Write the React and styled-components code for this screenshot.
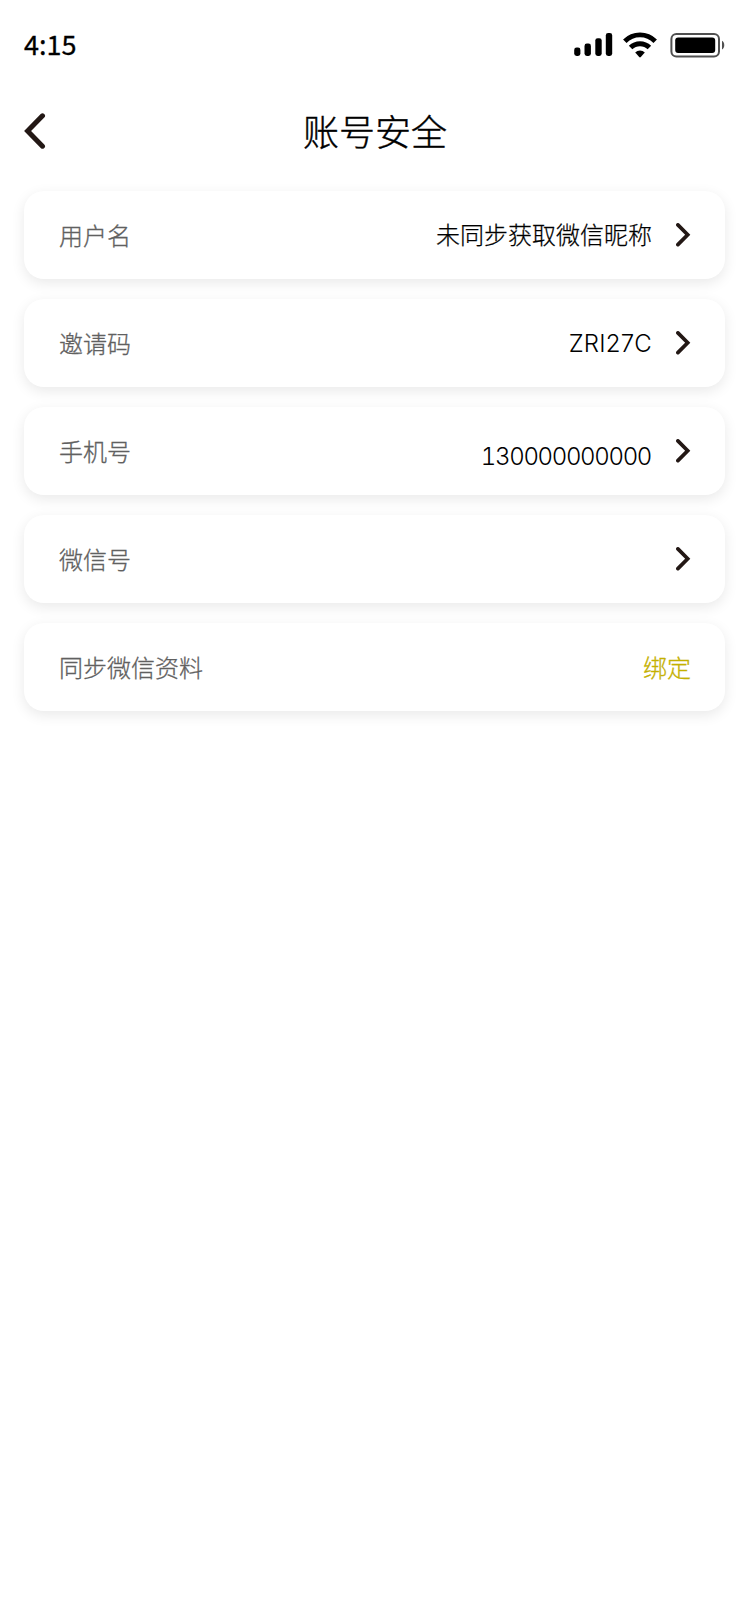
import React from 'react'
import styled, { createGlobalStyle } from 'styled-components'

const GlobalStyle = createGlobalStyle`
body {
    margin: 0;
    background: #FFF;
}

* {
    box-sizing: border-box;
}

svg {
    display: block;
}
`

const Page = styled.div`
min-height: 1624px;
font-family: "Noto Sans CJK SC", sans-serif;
font-weight: 300;
color: #000;
`

const StatusBar = styled.div`
height: 88px;
padding: 0 25px 0 24px;
display: flex;
align-items: center;
justify-content: space-between;
`

const Time = styled.div`
font-size: 27px;
font-weight: 400;
line-height: 40px;
-webkit-text-stroke: 0.3px #000;
`

const StatusIcons = styled.div`
padding-top: 1px;
display: grid;
grid-template-columns: 49px 47px 55px;
align-items: center;
`

const NavBar = styled.div`
height: 88px;
padding: 0 24px 3px;
display: grid;
grid-template-columns: 60px 1fr 60px;
align-items: center;
`

const Title = styled.h1`
margin: 0;
padding-bottom: 2px;
font-size: 36px;
font-weight: 300;
line-height: 52px;
text-align: center;
-webkit-text-stroke: 0.4px #000;
`

const List = styled.div`
padding: 15px 25px 0 24px;
display: grid;
gap: 20px;
`

const Card = styled.div`
height: 88px;
padding: 0 34px 0 35px;
display: flex;
align-items: center;
border-radius: 20px;
background: #FFF;
box-shadow: 0 4px 14px rgba(0, 0, 0, 0.09);
`

const Label = styled.div`
flex: 1;
padding-bottom: 1px;
font-size: 24px;
line-height: 36px;
color: #606060;
-webkit-text-stroke: 0.3px #606060;
`

const Value = styled.div`
margin-right: 24px;
padding-bottom: 2px;
font-size: 24px;
line-height: 36px;
-webkit-text-stroke: 0.25px #000;
`

const Code = styled(Value)`
margin-right: ${({ $tabular }) => ($tabular ? 25 : 24)}px;
padding: ${({ $drop = 2 }) => $drop}px 0 0;
font-family: Inter, sans-serif;
font-variant-numeric: ${({ $tabular }) => ($tabular ? 'tabular-nums' : 'normal')};
letter-spacing: ${({ $tabular }) => ($tabular ? '-1.35px' : '0.2px')};
-webkit-text-stroke: 0;
`

const Action = styled.div`
padding-bottom: 1px;
font-size: 24px;
line-height: 36px;
color: #C4B000;
-webkit-text-stroke: 0.3px #C4B000;
`

const Signal = () => (
    <svg width="39" height="24" viewBox="0 0 39 24">
        <rect x="0.2" y="14.5" width="6.2" height="8.5" rx="2.4" />
        <rect x="10.5" y="10.5" width="6.4" height="12.5" rx="2.4" />
        <rect x="21.3" y="5.2" width="6.4" height="17.8" rx="2.4" />
        <rect x="31.8" y="0" width="6.4" height="23" rx="2.4" />
    </svg>
)

const Wifi = () => (
    <svg width="34" height="26" viewBox="0 0 34 26">
        <g fill="none" stroke="#000" strokeWidth="4.9">
            <path d="M1.8 9.2a21.5 21.5 0 0 1 30.4 0" />
            <path d="M7.6 15.6a13.3 13.3 0 0 1 18.8 0" />
        </g>
        <path d="M12.2 20.6a6.8 6.8 0 0 1 9.6 0L17.8 25q-.8.8-1.6 0z" />
    </svg>
)

const Battery = () => (
    <svg width="55" height="26" viewBox="0 0 55 26">
        <rect x="1.4" y="1.9" width="47.6" height="22.6" rx="5" fill="none" stroke="#505050" strokeWidth="2" />
        <rect x="5.2" y="5.5" width="40" height="15.6" rx="3" />
        <path d="M52 8.8c3 1.6 3 7.2 0 8.8z" fill="#505050" />
    </svg>
)

const Back = () => (
    <svg width="22" height="36" viewBox="0 0 22 36" fill="none" stroke="#231815" strokeWidth="5" strokeLinecap="round">
        <path d="M18.5 2.8L3.6 18l14.9 15.2" />
    </svg>
)

const Chevron = () => (
    <svg width="15" height="24" viewBox="0 0 15 24" fill="none" stroke="#231815" strokeWidth="3.7" strokeLinecap="round">
        <path d="M1.9 1.9l9.8 9.8-9.8 9.9" />
    </svg>
)

const rows = [
    { label: '用户名', value: '未同步获取微信昵称' },
    { label: '邀请码', code: 'ZRI27C' },
    { label: '手机号', code: '130000000000', drop: 12, tabular: true },
    { label: '微信号' },
    { label: '同步微信资料', action: '绑定' },
]

const App = () => (
    <Page>
        <GlobalStyle />
        <StatusBar>
            <Time>4:15</Time>
            <StatusIcons>
                <Signal />
                <Wifi />
                <Battery />
            </StatusIcons>
        </StatusBar>
        <NavBar>
            <Back />
            <Title>账号安全</Title>
        </NavBar>
        <List>
            {rows.map(({ label, value, code, action, drop, tabular }) => (
                <Card key={label}>
                    <Label>{label}</Label>
                    {value && <Value>{value}</Value>}
                    {code && <Code $drop={drop} $tabular={tabular}>{code}</Code>}
                    {action ? <Action>{action}</Action> : <Chevron />}
                </Card>
            ))}
        </List>
    </Page>
);

export default App;
